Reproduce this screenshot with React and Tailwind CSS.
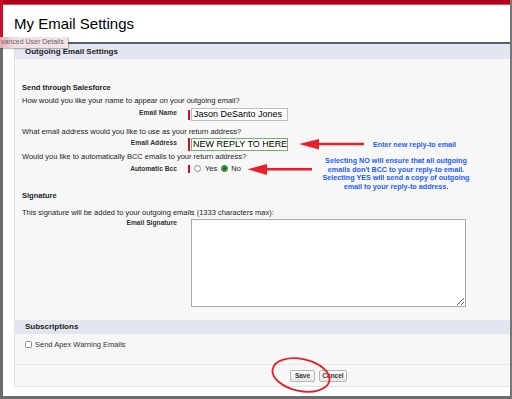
import React from "react";

// shared font stack (Arial metrics)
const FONT = "font-['Liberation_Sans',Arial,Helvetica,sans-serif]";

const FieldLabel = ({ children }) => (
    <div className="w-[155px] shrink-0 text-right font-bold text-[6.7px] leading-[10px] text-[#333]">
        {children}
    </div>
);

const RequiredBar = ({ h = "h-[13px]" }) => <span className={`w-[2px] ${h} bg-[#c8102e] shrink-0`} />;

const Question = ({ className = "", children }) => (
    <p className={`text-[7.5px] leading-[10px] text-[#222] ${className}`}>{children}</p>
);

const SectionBand = ({ className = "", children }) => (
    <div className={`bg-[#e2e6ee] pl-[10px] flex items-center font-bold text-[8px] text-[#222] ${className}`}>
        {children}
    </div>
);

const Radio = ({ checked, className = "" }) =>
    checked ? (
        <span className={`w-[7px] h-[7px] rounded-full bg-[#4fa64f] border border-[#2c7a2c] flex items-center justify-center shrink-0 ${className}`}>
            <span className="w-[3px] h-[3px] rounded-full bg-[#1e5a1e]" />
        </span>
    ) : (
        <span className={`block w-[7px] h-[7px] rounded-full bg-white border border-[#8a8a8a] shrink-0 ${className}`} />
    );

export default function App() {
    return (
        <div className={`relative w-[512px] h-[399px] overflow-hidden flex bg-[#707070] ${FONT}`}>
            {/* left window edge */}
            <div className="w-[3px] shrink-0 flex flex-col">
                <div className="h-[46px] bg-[#c8102e]" />
                <div className="flex-1 bg-[#6b6b6b]" />
            </div>

            <div className="flex-1 flex flex-col border-r-2 border-[#777]">
                <div className="h-[5px] bg-[#b3001e] border-b border-[#e8495c]" />

                <main className="flex-1 bg-white pt-[10px] pl-[11px] pb-[9px] flex flex-col">
                    <h1 className="text-[15px] leading-[17px] text-black">My Email Settings</h1>

                    <section className="mt-[10px] flex-1 flex flex-col border-t-2 border-t-[#59616d] border-l border-b border-l-[#e2e2e2] border-b-[#e2e2e2] bg-[#f7f7f7]">
                        <SectionBand className="h-[15px]">Outgoing Email Settings</SectionBand>

                        <div className="pl-[7px] pt-[24px] pb-[13px] flex flex-col">
                            <h3 className="font-bold text-[7.5px] leading-[10px] text-[#222]">Send through Salesforce</h3>

                            <Question className="mt-[3px]">How would you like your name to appear on your outgoing email?</Question>
                            <div className="mt-[2px] h-[13px] flex items-start">
                                <FieldLabel>Email Name</FieldLabel>
                                <div className="ml-[11px] flex items-center h-[13px]">
                                    <RequiredBar h="h-[10px]" />
                                    <div className="ml-[1px] w-[97px] h-[13px] bg-white border border-[#bdbdbd] pl-[2px] text-[9px] leading-[11px] text-black whitespace-nowrap">
                                        Jason DeSanto Jones
                                    </div>
                                </div>
                            </div>

                            <Question className="mt-[6px]">What email address would you like to use as your return address?</Question>
                            <div className="mt-[1px] h-[13px] flex items-start">
                                <FieldLabel>Email Address</FieldLabel>
                                <div className="ml-[11px] flex items-center h-[13px]">
                                    <RequiredBar h="h-[13px]" />
                                    <div className="ml-[1px] w-[97px] h-[13px] bg-white border border-[#6cb85f] pl-[1px] text-[9px] leading-[11px] text-black whitespace-nowrap">
                                        NEW REPLY TO HERE
                                    </div>
                                </div>
                            </div>

                            <Question className="mt-[1px]">Would you like to automatically BCC emails to your return address?</Question>
                            <div className="mt-[2px] h-[9px] flex items-center">
                                <FieldLabel>Automatic Bcc</FieldLabel>
                                <div className="ml-[11px] flex items-center h-[9px] text-[7.5px] text-[#222]">
                                    <RequiredBar h="h-[8px]" />
                                    <Radio className="ml-[4px]" />
                                    <span className="ml-[4px]">Yes</span>
                                    <Radio checked className="ml-[4px]" />
                                    <span className="ml-[3px]">No</span>
                                </div>
                            </div>

                            <h3 className="mt-[18px] font-bold text-[7.5px] leading-[10px] text-[#222]">Signature</h3>
                            <Question className="mt-[7px]">
                                This signature will be added to your outgoing emails (1333 characters max):
                            </Question>
                            <div className="flex items-start">
                                <FieldLabel>Email Signature</FieldLabel>
                                <textarea
                                    readOnly
                                    className="ml-[14px] mt-[1px] w-[275px] h-[88px] bg-white border border-[#a9a9a9] outline-none"
                                />
                            </div>
                        </div>

                        <SectionBand className="h-[14px]">Subscriptions</SectionBand>
                        <div className="pl-[10px] pt-[7px] pb-[16px] flex items-center">
                            <span className="w-[7px] h-[7px] rounded-[1.5px] border border-[#8a8a8a] bg-white" />
                            <span className="ml-[3px] text-[7.5px] leading-[7px] text-[#333]">Send Apex Warning Emails</span>
                        </div>

                        <div className="border-t border-[#e9e9e9] pt-[5px] pb-[4px] pl-[275px] flex gap-[4px]">
                            <button className="w-[25px] h-[12px] rounded-[2px] border border-[#b5b5b5] bg-linear-to-b from-white to-[#e6e6e6] text-[6.5px] font-bold text-[#333]">
                                Save
                            </button>
                            <button className="w-[28px] h-[12px] rounded-[2px] border border-[#b5b5b5] bg-linear-to-b from-white to-[#e6e6e6] text-[6.5px] font-bold text-[#333]">
                                Cancel
                            </button>
                        </div>
                    </section>
                </main>

                <div className="h-[3px] bg-[#6e6e6e]" />
            </div>

            {/* hover tooltip from the page underneath, its start scrolled off the left */}
            <div className="absolute left-0 top-[37px] h-[11px] w-[68px] pl-[1px] whitespace-nowrap bg-linear-to-r from-[#e7aab5] via-[#f3dfe3] via-[22%] to-[#f4e3e6] shadow-[1px_1px_1px_rgba(0,0,0,0.25)] flex items-center">
                <span className="text-[7px] text-[#666]">vanced User Details</span>
            </div>

            {/* annotations */}
            <svg className="absolute inset-0 pointer-events-none" width="512" height="399" viewBox="0 0 512 399">
                <line x1="364" y1="144" x2="314" y2="144" stroke="#e8202a" strokeWidth="2.6" />
                <polygon points="299,144 319,139 319,149.5" fill="#e8202a" />
                <line x1="312" y1="169.3" x2="264" y2="169.3" stroke="#e8202a" strokeWidth="2.6" />
                <polygon points="247.5,169.3 267,164 267,175" fill="#e8202a" />
                <ellipse cx="301" cy="375" rx="29" ry="16" transform="rotate(12 301 375)" fill="none" stroke="#e81e25" strokeWidth="1.8" />
            </svg>

            <p className="absolute left-[373px] top-[139.5px] text-[7.2px] leading-[9px] font-bold text-[#1e5bff] whitespace-nowrap">
                Enter new reply-to email
            </p>
            <div className="absolute left-[316px] top-[157px] w-[160px] text-center text-[7.2px] leading-[8.6px] font-bold text-[#1e5bff]">
                <p>Selecting NO will ensure that all outgoing</p>
                <p>emails don't BCC to your reply-to email.</p>
                <p>Selecting YES will send a copy of outgoing</p>
                <p>email to your reply-to address.</p>
            </div>
        </div>
    );
}
